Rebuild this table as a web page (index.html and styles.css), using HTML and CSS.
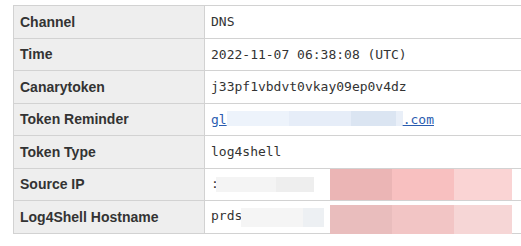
FILE: index.html
```html
<!DOCTYPE html>
<html lang="en">
<head>
<meta charset="utf-8">
<title>Alert details</title>
<link rel="stylesheet" href="styles.css">
</head>
<body>
<div class="details">
  <table class="alert-table">
    <tr><th>Channel</th><td>DNS</td></tr>
    <tr><th>Time</th><td>2022-11-07 06:38:08 (UTC)</td></tr>
    <tr><th>Canarytoken</th><td>j33pf1vbdvt0vkay09ep0v4dz</td></tr>
    <tr><th>Token Reminder</th><td><a class="link" href="#">gl<span class="mask mask-blue"><i class="b1"></i><i class="b2"></i><i class="b3"></i><i class="b4"></i></span>.com</a></td></tr>
    <tr><th>Token Type</th><td>log4shell</td></tr>
    <tr><th>Source IP</th><td>:<span class="mask mask-grey ip"><i class="g1"></i><i class="g2"></i></span></td></tr>
    <tr><th>Log4Shell Hostname</th><td>prds<span class="mask mask-grey host"><i class="g1"></i><i class="g2"></i></span></td></tr>
  </table>
  <div class="stamp stamp-ip"><i class="p1"></i><i class="p2"></i><i class="p3"></i></div>
  <div class="stamp stamp-host"><i class="q1"></i><i class="q2"></i><i class="q3"></i></div>
</div>
</body>
</html>
```

FILE: styles.css
```css
html, body {
  margin: 0;
  padding: 0;
  background: #ffffff;
  overflow: hidden;
}

.details {
  position: relative;
  margin: 5px 0 0 13px;
  width: 508px;
}

.alert-table {
  border-collapse: collapse;
  width: 508px;
  table-layout: fixed;
}

.alert-table tr {
  height: 32.5px;
}

.alert-table th,
.alert-table td {
  border: 1px solid #d2d2d2;
  padding: 0;
  vertical-align: middle;
  white-space: nowrap;
  overflow: hidden;
}

.alert-table td {
  border-right: none;
}

.alert-table th {
  width: 184px;
  padding-left: 6px;
  background: #eeeeee;
  color: #333333;
  text-align: left;
  font: bold 14px "Liberation Sans", Arial, sans-serif;
}

.alert-table td {
  padding-left: 6px;
  color: #333333;
  font: 13px "DejaVu Sans Mono", "Liberation Mono", monospace;
}

.link {
  color: #2a5cb0;
  text-decoration: underline;
}

.mask {
  display: inline-flex;
  vertical-align: middle;
}

.mask i {
  display: block;
  height: 100%;
}

.mask-blue {
  width: 176px;
  height: 15px;
  margin-top: -3px;
}
.mask-blue .b1 { width: 62px; background: #edf3fb; }
.mask-blue .b2 { width: 62px; background: #e6edf8; }
.mask-blue .b3 { width: 45px; background: #dbe5f2; }
.mask-blue .b4 { width: 7px; background: #e9eff8; }

.mask-grey.ip {
  width: 98px;
  height: 15px;
  margin-left: -3px;
}
.mask-grey.ip .g1 { width: 60px; background: #f4f4f4; }
.mask-grey.ip .g2 { width: 38px; background: #eeeeee; }

.mask-grey.host {
  width: 83px;
  height: 19px;
  margin-left: -1px;
  margin-top: 2px;
}
.mask-grey.host .g1 { width: 62px; background: #f5f5f5; }
.mask-grey.host .g2 { width: 21px; background: #edf0f3; }

.stamp {
  position: absolute;
  left: 317px;
  width: 182px;
  display: flex;
}

.stamp i {
  display: block;
  height: 100%;
}

.stamp-ip {
  top: 164px;
  height: 31px;
}
.stamp-ip .p1 { width: 62px; background: #ebb5b5; }
.stamp-ip .p2 { width: 62px; background: #f8c0c0; }
.stamp-ip .p3 { width: 58px; background: #fad4d4; }

.stamp-host {
  top: 200px;
  height: 32px;
}
.stamp-host .q1 { width: 62px; background: #e9bdbd; }
.stamp-host .q2 { width: 62px; background: #f2c5c5; }
.stamp-host .q3 { width: 58px; background: #f6d6d6; }
```
